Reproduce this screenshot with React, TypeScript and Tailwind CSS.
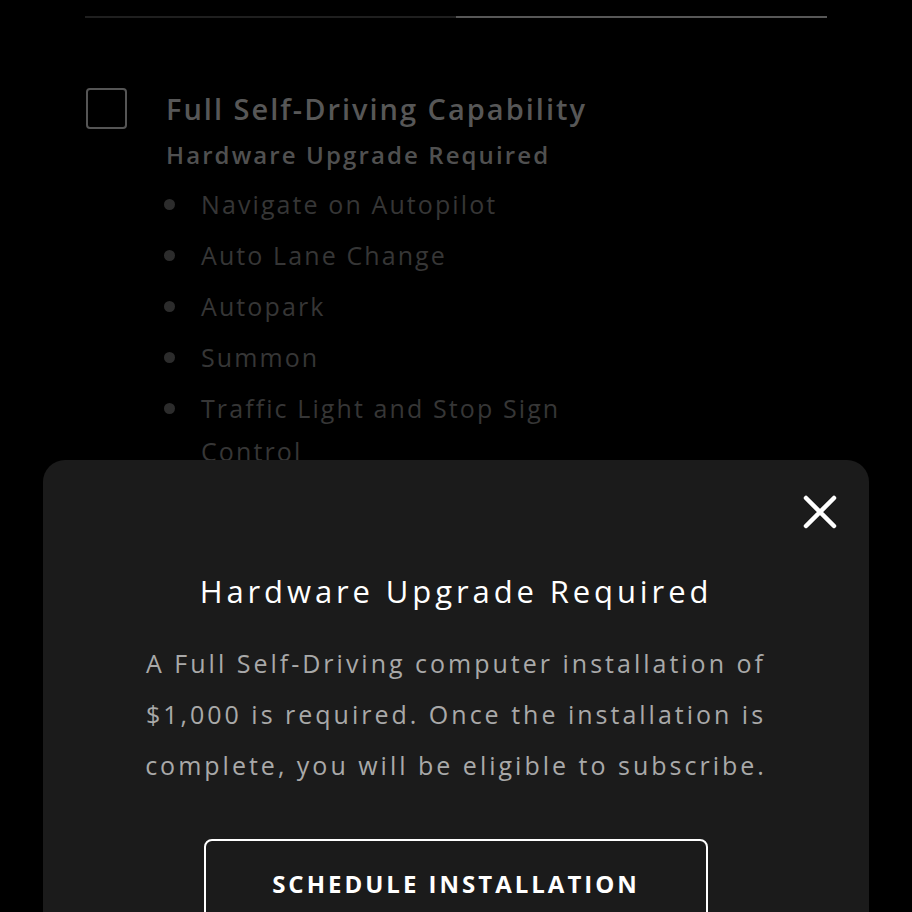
import React from "react";

const features = [
  "Navigate on Autopilot",
  "Auto Lane Change",
  "Autopark",
  "Summon",
  "Traffic Light and Stop Sign Control",
];

const CloseIcon = () => (
  <svg width="34" height="34" viewBox="0 0 34 34" fill="none">
    <path d="M3 3L31 31M31 3L3 31" stroke="#fff" strokeWidth="4.5" strokeLinecap="round" />
  </svg>
);

export default function App() {
  return (
    <div
      className="relative h-[912px] w-[912px] overflow-hidden bg-black"
      style={{ fontFamily: "'Open Sans', 'Liberation Sans', sans-serif" }}
    >
      {/* tab indicator */}
      <div className="flex px-[85px] pt-[16px]">
        <div className="h-[2px] flex-1 bg-[#1f1f1f]" />
        <div className="h-[2px] flex-1 bg-[#575757]" />
      </div>

      <div className="flex gap-[39px] px-[86px] pt-[70px]">
        <div className="h-[41px] w-[41px] shrink-0 rounded-[4px] border-2 border-[#555]" />
        <div>
          <h2 className="text-[29px] font-semibold leading-[41px] tracking-[2px] text-[#575757]">
            Full Self-Driving Capability
          </h2>
          <p className="mt-[10px] text-[24px] font-semibold leading-[32px] tracking-[2.1px] text-[#505050]">
            Hardware Upgrade Required
          </p>
          <ul className="mt-[8px]">
            {features.map((f) => (
              <li key={f} className="flex gap-[26px] py-[4px]">
                <span className="-ml-[2px] mt-[16px] h-[11px] w-[11px] shrink-0 rounded-full bg-[#2c2c2c]" />
                <span className="w-[400px] text-[25px] leading-[43px] tracking-[2.1px] text-[#363636]">{f}</span>
              </li>
            ))}
          </ul>
        </div>
      </div>

      {/* modal sheet */}
      <div className="absolute left-[43px] top-[460px] h-[500px] w-[826px] rounded-[22px] bg-[#1b1b1b]">
        <div className="flex justify-end px-[32px] pt-[35px]">
          <CloseIcon />
        </div>
        <div className="flex flex-col items-center">
          <h3 className="mt-[42px] text-[31px] leading-[40px] tracking-[3.9px] text-white">Hardware Upgrade Required</h3>
          <p className="mt-[27px] w-[680px] text-center text-[25px] leading-[51px] tracking-[3px] text-[#a9a9a9]">
            A Full Self-Driving computer installation of $1,000 is required. Once the installation is complete, you will be eligible to subscribe.
          </p>
          <button className="mt-[48px] h-[90px] w-[504px] rounded-[8px] border-2 border-white text-[24px] font-bold tracking-[3px] text-white">
            SCHEDULE INSTALLATION
          </button>
        </div>
      </div>
    </div>
  );
}
